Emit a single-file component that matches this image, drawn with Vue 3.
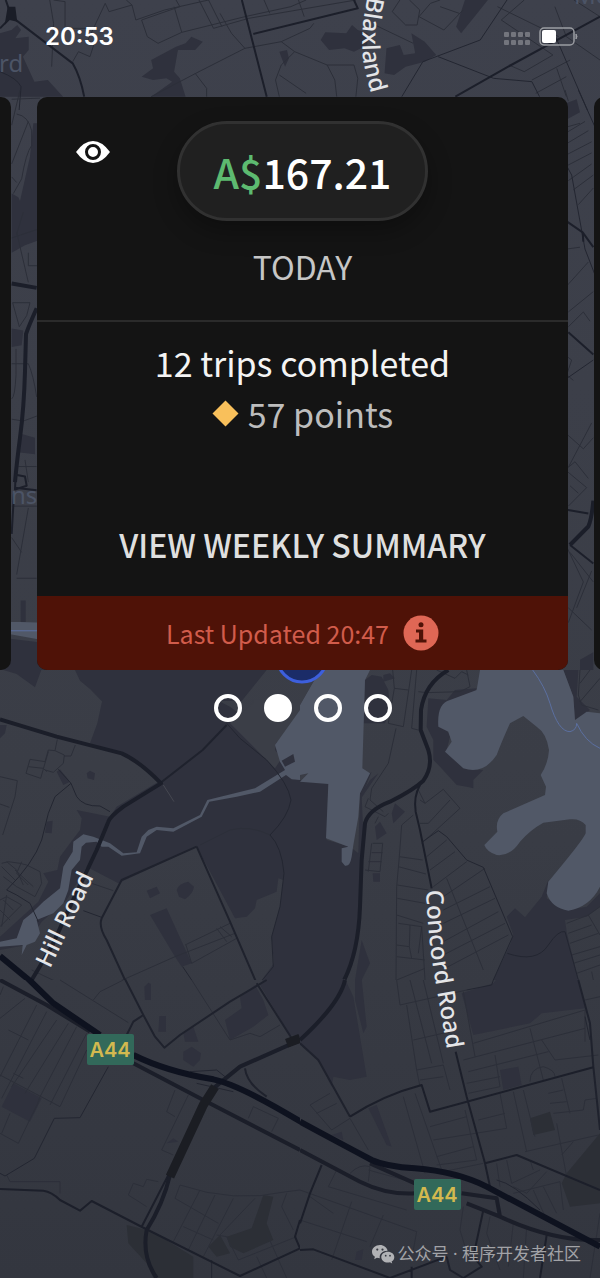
<template>
  <main class="screen">
    <svg class="map" viewBox="0 0 600 1278" preserveAspectRatio="xMidYMin slice" aria-hidden="true">
      <defs>
        <linearGradient id="ground" x1="0" y1="0" x2="0" y2="1">
          <stop offset="0" stop-color="#3e414c" />
          <stop offset="0.6" stop-color="#3a3d46" />
          <stop offset="1" stop-color="#33363f" />
        </linearGradient>
        <path id="hill-road" d="M50 969 L102 860" />
        <path id="concord-road" d="M426 890 Q428 940 436 985 T449 1062" />
        <path id="blaxland" d="M368 -4 Q360 30 363 58 Q366 78 376 110" />
      </defs>
      <rect width="600" height="1278" fill="url(#ground)" />

      <svg
        v-for="tile in tiles"
        :key="tile.name"
        :x="tile.x"
        :y="tile.y"
        :width="tile.width"
        :height="tile.height"
        :viewBox="tile.box"
        preserveAspectRatio="none"
      >
        <path v-for="(shape, index) in tile.shapes" :key="index" :class="shape[0]" :d="shape[1]" />
      </svg>

      <!-- 현재 위치 -->
      <circle class="location" cx="302" cy="657" r="25" />

      <text class="place" x="-1" y="72">rd</text>
      <text class="place" x="574" y="4">Me</text>
      <text class="place" x="11" y="504">ns</text>

      <text class="road-name"><textPath href="#blaxland">Blaxland</textPath></text>
      <text class="road-name"><textPath href="#hill-road">Hill Road</textPath></text>
      <text class="road-name"><textPath href="#concord-road">Concord Road</textPath></text>

      <g v-for="sign in signs" :key="sign.y">
        <rect class="sign" :x="sign.x" :y="sign.y" width="47" height="31" rx="2" />
        <text class="sign-text" :x="sign.x + 23" :y="sign.y + 23">A44</text>
      </g>
    </svg>

    <header class="status-bar">
      <time>20:53</time>
      <div class="status-icons">
        <svg width="28" height="18" viewBox="0 0 28 18" fill="#73757d" aria-hidden="true">
          <rect v-for="n in 8" :key="n" :x="((n - 1) % 4) * 7 + 1" :y="n > 4 ? 12 : 4" width="5" height="5" rx="1" />
        </svg>
        <svg width="39" height="20" viewBox="0 0 39 20" aria-hidden="true">
          <rect x="1" y="1" width="34" height="17" rx="4" fill="none" stroke="#9b9da2" stroke-width="1.5" />
          <rect x="3" y="3" width="14" height="13" rx="2" fill="#fff" />
          <path d="M37 7 Q39 9.500 37 12Z" fill="#9b9da2" stroke="#9b9da2" />
        </svg>
      </div>
    </header>

    <section class="carousel">
      <div class="card"></div>

      <article class="card">
        <div class="card-head">
          <button class="eye-btn" aria-label="Hide earnings" @click="hidden = !hidden">
            <svg width="36" height="36" viewBox="0 0 36 36">
              <path d="M1 18 Q9 7 18 7 T35 18 Q27 29 18 29 T1 18Z" fill="#fff" />
              <circle cx="18" cy="18" r="6.500" fill="#fff" stroke="#141414" stroke-width="3" />
            </svg>
          </button>
          <div class="amount">
            <span class="currency">A$</span><span>{{ hidden ? "•••" : "167.21" }}</span>
          </div>
          <h2 class="day">TODAY</h2>
        </div>

        <div class="card-body">
          <p class="trips">12 trips completed</p>
          <p class="points">
            <svg width="27" height="27" viewBox="0 0 27 27" aria-hidden="true">
              <path d="M13.500 0.500 L26.500 13.500 L13.500 26.500 L0.500 13.500Z" fill="#f9c05b" />
            </svg>
            <span>57 points</span>
          </p>
          <button class="summary-btn">VIEW WEEKLY SUMMARY</button>
        </div>

        <div class="card-foot">
          <span>Last Updated 20:47</span>
          <button class="info-btn" aria-label="Info">
            <svg width="36" height="36" viewBox="0 0 36 36">
              <circle cx="18" cy="18" r="17.500" fill="#df6755" />
              <circle cx="18" cy="9.800" r="2.500" fill="#4f1207" />
              <path d="M13 14.500H20.200V24.500H23.500V27.500H12.500V24.500H16V17.500H13Z" fill="#4f1207" />
            </svg>
          </button>
        </div>
      </article>

      <div class="card"></div>
    </section>

    <nav class="dots">
      <button
        v-for="n in 4"
        :key="n"
        class="dot"
        :class="{ active: n === current }"
        :aria-label="`Page ${n}`"
        @click="current = n"
      ></button>
    </nav>

    <footer class="account">
      <svg width="24" height="20" viewBox="0 0 24 20" aria-hidden="true">
        <path
          d="M9 1C4.500 1 1 4 1 7.700c0 2.100 1.100 3.900 2.900 5.100L3.200 15.200l2.700-1.400c1 .3 2 .4 2.900.4-.8-4 2.700-7.400 7.800-7.400C16 3.500 12.800 1 9 1Z"
          fill="#b1b2b5"
        />
        <path
          d="M23.300 13.200c0-3-2.900-5.400-6.500-5.400s-6.500 2.400-6.500 5.400 2.900 5.400 6.500 5.400c.8 0 1.500-.1 2.200-.3l2.200 1.200-.6-2c1.700-1 2.700-2.600 2.700-4.300Z"
          fill="#b1b2b5"
        />
        <g fill="#373a42">
          <circle cx="6.300" cy="5.600" r="1.100" />
          <circle cx="11.500" cy="5.600" r="1.100" />
          <circle cx="14.700" cy="11.700" r="0.900" />
          <circle cx="19" cy="11.700" r="0.900" />
        </g>
      </svg>
      <span>公众号 · 程序开发者社区</span>
    </footer>
  </main>
</template>

<script setup>
import { ref } from "vue";

const hidden = ref(false);
const current = ref(2);

const signs = [
  { x: 87, y: 1034 },
  { x: 414, y: 1179 },
];

// 지도 타일: [종류, 경로]
const tiles = [
  {
    name: "north",
    x: 0,
    y: 0,
    width: 600,
    height: 110,
    box: "0 0 1568 330",
    shapes: [
      ["park", "M0 100 L30 90 L45 75 L55 90 L40 115 L75 110 L75 150 L60 170 L90 245 L125 240 L165 290 H0Z"],
      ["park", "M370 230 L400 205 L395 180 L460 140 L485 130 L500 110 L530 125 L510 150 L465 150 L455 215 L470 235 L485 290 H395 L450 245 L435 235 L400 240Z"],
      ["park", "M838 120 L850 97 L905 100 L920 75 L935 90 L960 100 L960 135 L925 155 L900 145 L860 150Z"],
      ["park", "M1010 145 L1045 135 L1055 165 L1085 160 L1075 100 L1110 125 L1140 165 L1110 185 L1060 200 L1030 225 L1005 220Z"],
      ["park", "M1215 0 H1275 L1240 50 L1205 100 L1192 80Z M730 155 L750 150 L755 175 L745 200 L738 180Z"],
      ["lane", "M130 0 L140 70 L135 200 M140 0 L170 5 L170 85 L230 85 M275 10 L230 120 L245 135 L235 170 L205 155 L190 185 M275 10 L285 35 L345 15 L330 0 M345 15 L355 60 L430 30 L545 0"],
      ["lane", "M370 60 L470 20 L460 0 M370 60 L385 110 L413 130 L475 97 L455 20 M475 97 L640 50 L760 20 L800 0 M520 0 L558 85 L650 55 M545 0 L580 80 M650 55 L930 0 M690 0 L705 40 M780 0 L795 50"],
      ["lane", "M395 290 L520 215 L640 145 L735 125 L770 155 L855 195 L925 195 L935 235 L930 290 M770 155 L735 195 L720 240 L730 290 M855 195 L875 240 L880 290 M640 145 L605 100 L575 40 M820 70 L810 85 L735 125 M510 220 L540 265 L540 290 M730 225 L800 280"],
      ["lane", "M1045 0 L1025 35 L1060 75 L1090 75 L1097 30 L1070 0 M1125 10 L1095 50 L1160 90 L1210 30 M1125 10 L1150 0 M1150 20 L1200 40 M980 75 L1080 130 M1300 20 L1460 110 M1370 0 L1310 60 L1445 165 L1370 215 L1330 195 M1450 20 L1480 110 L1568 180 M1390 240 L1490 180 M1400 280 L1480 230 M1455 205 L1480 290 M1500 0 L1568 50"],
      ["street", "M0 215 Q45 235 55 260 L50 330 M1325 0 L1255 120 L1105 185 L1050 290 M1145 170 L1290 235 L1390 245 L1410 290 M1450 105 L1535 330"],
      ["road", "M15 0 L30 50 L0 85 M30 50 L190 190 Q210 230 220 290 M632 0 L697 290 M662 102 L935 25 L925 0 M1190 290 L1320 205 L1568 50"],
      ["junction", "M20 20 H40 L45 65 L25 60 L12 75Z"],
    ],
  },
  {
    name: "west",
    x: 0,
    y: 90,
    width: 45,
    height: 580,
    box: "0 0 135 1568",
    shapes: [
      ["park", "M35 280 L55 290 L75 330 L60 300 L90 180 L100 90 H135 V400 L75 420 L35 440Z"],
      ["park", "M35 645 L70 650 L65 690 L35 695Z M65 930 L105 940 V985 L60 980Z M62 1380 H77 V1438 H62Z"],
      ["water", "M0 1438 H60 L135 1440 V1488 L35 1472 H0Z"],
      ["river", "M0 1462 H135"],
      ["park", "M0 1480 L135 1495 V1568 H0Z"],
      ["lane", "M50 65 Q85 70 95 110 L95 150 Q78 170 65 240 L40 280 M85 85 L35 200 M35 235 L50 250 M50 385 L85 520 M70 330 L50 390 M85 440 V475 H125 M35 400 L135 370 M38 575 L90 575 L80 610 L58 640Z M48 700 V770 Q45 830 35 835 M35 740 H85 Q100 770 110 830 M35 890 L70 895 L115 880 M75 1000 L85 1060 M55 1018 H110 M85 1130 L50 1310 M35 1125 H120 M65 1250 L35 1210 M50 1320 H110"],
      ["lane", "M60 0 L35 95 M35 25 L120 22"],
      ["major", "M35 523 L110 535 M110 590 Q85 640 78 660 L75 760 Q72 860 60 940 Q50 1010 45 1060"],
      ["road", "M42 1090 L35 1200 M45 1075 L110 1082 M47 1040 L75 1045 L80 1070 L45 1080Z"],
    ],
  },
  {
    name: "east",
    x: 560,
    y: 90,
    width: 40,
    height: 580,
    box: "0 0 120 1568",
    shapes: [
      ["park", "M20 35 L50 25 L60 60 L20 80Z M60 1540 L100 1520 V1568 H60Z"],
      ["lane", "M20 115 L75 85 M20 145 L85 110 M20 175 L95 140 M20 205 L95 170 M25 245 L95 200 M40 270 L100 230 M55 310 L100 265 M20 100 L60 90 M15 0 L25 30 M20 430 L60 425 M20 530 L85 465 M25 600 L100 545 M25 640 L70 600 L90 625 M20 720 L35 730 L20 770 L40 785"],
      ["lane", "M20 930 L70 970 L100 940 M95 900 L25 1020 L45 1005 L85 1050 M20 1030 L80 1075 L25 1125 M30 1070 L55 1090 M20 1235 L70 1330 L25 1440 M25 1400 L95 1460 M95 1300 L50 1400 M30 1250 L100 1330"],
      ["street", "M20 205 L35 230 L65 380 L75 430 L105 500 M55 0 L105 100 M20 780 L100 730"],
      ["road", "M20 355 L68 385 L100 425 M68 385 L70 410 M25 655 L100 715 M20 1135 L85 1145 M30 1230 L100 1280"],
      ["major", "M100 1110 Q95 1160 85 1180 L30 1230"],
    ],
  },
  {
    name: "shore",
    x: 0,
    y: 669,
    width: 300,
    height: 32,
    box: "0 0 900 96",
    shapes: [
      ["park", "M0 0 H125 L105 55 L50 15 L0 0Z M225 3 H800 L725 96 H300 L305 96 L270 60 L240 35Z"],
    ],
  },
  {
    name: "west-park",
    x: 0,
    y: 700,
    width: 300,
    height: 280,
    box: "0 0 900 840",
    shapes: [
      ["park", "M307 0 L292 70 L270 130 L380 165 L475 245 L350 320 L330 350 L230 330 L245 355 L240 390 L210 430 L180 470 L172 510 L130 520 L145 545 L115 605 L0 710 V750 L80 735 L125 665 L200 600 L260 500 L355 550 L590 440 L705 655 L740 650 L765 625 L770 600 L830 575 L835 535 L850 540 L840 620 L815 710 L822 790 L785 840 H900 V240 L880 235 L858 200 L860 170 L825 140 L830 125 L690 20 L650 0Z"],
      ["land", "M690 70 L760 10 L760 0 H900 V100 L830 125 L825 150 L845 175 L825 205Z"],
      ["park", "M260 220 L270 212 L285 220 L282 240 L263 235Z M440 572 L470 560 L480 580 L450 595Z M530 570 Q535 550 565 545 L582 560 Q580 580 555 598 L537 590Z M450 645 L500 625 L575 790 L545 800 L525 770Z M170 215 L180 208 L210 245 L190 255Z M140 365 L158 362 L155 400 L135 398Z M0 75 H20 L15 100 L0 115Z"],
      ["water", "M825 135 L900 30 V240 L875 238 L858 225 L780 275 L710 290 L628 305 L605 350 L520 395 L470 390 L440 410 L420 460 L365 467 L325 440 L305 440 L290 425 L258 428 L245 440 L240 480 L215 510 L205 570 L190 610 L160 640 L110 660 L120 700 L105 725 L80 735 L65 765 L68 735 L0 740 V725 L50 715 L70 660 L95 640 L130 605 L180 565 L190 500 L218 455 L220 425 L250 403 L280 410 L330 430 L370 460 L410 457 L425 410 L445 390 L470 380 L520 385 L600 345 L622 300 L765 265 L855 210 L840 185Z"],
      ["park", "M845 182 L880 162 L885 185 L855 200Z"],
      ["lane", "M0 230 L52 242 L45 290 L8 405 M0 312 L28 322 M172 118 L165 152 L145 150 L135 185 L90 178 L78 220 L122 235 L145 155 M85 200 L130 205 M135 210 L160 217 L190 190 L193 165 L165 152 M193 168 L213 168 L226 135 M130 205 L140 215 M5 490 L25 485 L60 490 L80 495 L120 515 L125 550 L105 590 L50 560 L10 530 M5 500 L45 540 M65 485 L50 520 L85 555 M20 485 L50 510 L70 555 M45 510 L100 560 M0 600 L20 590 L65 615 L0 680 M10 600 L40 630 M0 630 L30 660 M20 585 L5 680 M260 545 L340 572"],
      ["lane", "M95 810 L280 898 L300 870 L525 770 L705 700 M555 735 L690 670 M558 735 L575 790 L710 715 M650 685 L680 725 M660 680 L695 710 M600 435 L690 390 Q750 375 810 405"],
      ["street", "M213 250 L165 290 L145 340 L125 420 Q100 490 20 570 L50 585 L90 610 L115 665 M175 208 L213 250 L230 290 Q250 320 300 318 L330 335 M250 632 L305 652 M680 70 L720 115 L800 180 Q865 250 873 300 Q865 350 810 405 Q845 440 852 520 L840 620 L815 710 L820 800 L775 855 M548 800 L575 840"],
      ["path", "M680 75 L608 150 L480 250 M590 440 L365 540 L305 655 Q295 680 320 720 L375 840 M590 440 L690 665 L770 850"],
      ["faint", "M490 255 L522 305"],
      ["major", "M0 58 L170 110 L365 160 Q420 185 483 250 L370 320 Q330 350 325 365 L290 450 L210 620 L155 740 L95 840"],
      ["highway", "M0 768 L87 840 L130 875"],
    ],
  },
  {
    name: "bay",
    x: 300,
    y: 660,
    width: 300,
    height: 320,
    box: "0 0 900 960",
    shapes: [
      ["park", "M0 360 L85 370 L80 540 L150 560 L175 580 L180 400 L210 340 L215 335 L185 410 L190 520 L170 820 L140 960 H0Z"],
      ["park", "M210 360 L235 340 L180 420 L185 400Z M385 115 L440 120 L465 90 L530 85 L520 110 L420 160 L450 230 L440 270 L490 325 L550 330 L520 360 L520 385 L500 380 L470 375 L420 320 L400 300 L400 240 L380 200Z"],
      ["park", "M580 960 L630 855 L640 825 L620 770 L645 745 L675 772 L725 710 L745 660 L740 715 L800 750 L860 740 L900 700 V740 L860 770 L795 780 L800 815 L835 960Z"],
      ["park", "M250 45 L270 40 L285 55 L250 65Z M285 430 L315 455 L280 490 L275 460Z M240 485 L260 520 L230 540 L225 500Z M218 640 L240 640 V665 H220Z M185 840 L210 910 L185 960 H165 L175 900Z M265 90 L270 150 L255 190 L190 190 L195 60 L215 45 L245 50Z"],
      ["park", "M790 30 H835 L830 110 L870 150 L825 185 L820 110Z"],
      ["water", "M60 30 H210 L195 60 L187 325 L210 340 L180 400 L175 470 L160 555 L155 590 Q150 620 135 617 L125 605 L125 565 L145 560 L78 535 L85 372 L0 365 L25 340 L0 345 V135Z"],
      ["water", "M540 30 H790 L820 110 L825 180 L860 155 L900 160 V680 Q870 740 805 752 Q755 745 740 700 L745 665 Q850 540 857 520 V495 Q840 475 810 478 L730 488 Q690 510 660 545 Q630 590 590 585 Q560 575 553 555 L592 515 Q585 480 610 460 L735 405 L738 380 L722 345 Q745 310 747 270 Q740 220 710 200 L670 168 L630 190 Q605 245 590 285 Q550 345 490 325 L435 275 L455 245 L445 215 L415 200 Q410 130 450 120 L530 90Z"],
      ["land", "M0 135 L60 30 H0Z"],
      ["river", "M698 30 Q735 80 750 130 Q775 215 810 215 Q830 210 830 190 Q855 245 900 265"],
      ["lane", "M278 30 L283 85 L265 190 M283 85 L325 90 M335 30 L310 200 L265 190 M350 30 L335 205 L355 210 M355 95 L380 98 L480 95 L510 80 L500 30 M410 30 L465 55 L485 35 L505 45 M288 205 L265 310 L215 385 L210 420 M205 415 L195 440 L225 455 L255 470 L265 460 M210 420 L250 455 M225 490 L235 470 M218 550 H248 L240 635 L195 630 M215 578 H248 M205 605 H245 M215 550 L205 635 M340 465 L305 495 L298 590 L290 680 L288 960"],
      ["lane", "M298 590 L368 600 M295 620 L378 642 M292 675 L385 690 M292 715 L375 730 M290 765 L370 790 M295 790 L365 800 L355 880 M330 795 L328 860 L290 855 M328 860 L335 895 M290 890 L375 900 M290 960 L375 925 M365 800 L375 960 M355 390 L375 430 L430 388 L480 445 L365 550 M375 430 L360 420 M450 420 L385 490 L360 490 M380 590 L440 540 M390 630 L465 575 M400 680 L500 605 M440 655 L550 930 M430 710 L555 625 M430 750 L570 680 M430 790 L585 715 M430 845 L595 755 M430 885 L615 790 M435 925 L625 825"],
      ["lane", "M840 30 L835 105 L845 135 L895 150 M870 30 L840 70 M900 55 L840 125 M865 765 L900 825 M900 740 L865 765 L800 790 M805 820 L875 795 M810 850 L895 820 M815 885 L900 860 M820 910 L900 885 M830 940 L900 915 M875 935 L880 960"],
      ["street", "M415 512 L440 530 L500 600 L550 622 L638 830 L580 960 M622 880 Q710 910 745 855 Q775 810 795 815 L835 960 M368 545 L415 512"],
      ["road", "M360 375 Q340 410 347 455 L360 510 L395 685"],
      ["major", "M445 30 Q375 70 363 150 L362 210 L385 270 Q400 320 370 362 Q340 390 270 425 Q205 450 195 490 L185 600 L180 740 Q175 880 130 965"],
    ],
  },
  {
    name: "south-west",
    x: 0,
    y: 979,
    width: 300,
    height: 299,
    box: "0 -3 900 897",
    shapes: [
      ["park", "M780 15 L790 -3 H900 V170 L870 165Z M675 120 L725 85 L720 50 L765 15 L790 60 L805 105 L760 140 L690 180Z M433 20 L445 8 L453 12 V60 H435Z M478 108 H498 V155 H475Z M550 160 L580 140 L595 185 H555Z M550 215 L575 200 L603 220 L600 240 L580 260 L550 240Z M40 310 L125 355 L90 425 L5 380Z M500 490 L520 475 L535 485Z"],
      ["dark", "M380 735 L420 745 L465 760 L580 830 V894 H460 L440 850 L385 790Z M790 645 L820 650 L800 730 L820 780 L730 820 L690 800 L680 770 L755 745Z M625 800 L660 765 L690 820 L650 830Z"],
      ["lane", "M180 0 L385 128 M280 60 L300 35 L370 0 M575 0 L690 180 L750 160 L780 170 L840 135 M0 45 L10 20 M0 115 L75 55 M0 290 L110 75 M5 355 L140 95 M35 320 L170 120 M75 340 L205 130 M115 360 L230 140 M150 375 L260 160 M180 380 L260 210 M25 150 L85 180 M0 285 L180 380 M0 460 L55 490 L120 355 M30 400 L5 460 M40 280 L70 295"],
      ["lane", "M525 330 L500 395 L525 410 M565 345 L485 510 L520 525 M745 415 L760 380 L835 415 L815 455 M20 585 L30 605 L180 605 V640 M400 610 L385 645 L440 680 M400 610 L430 620 L440 598 L475 605 M540 615 L525 655 L655 730 M540 615 Q700 670 860 635 L900 630 M600 630 L520 785 M645 645 L565 810 M700 655 L610 830 M765 655 L660 765 M550 740 L640 780 M650 765 L680 770 L715 840 L890 770 M800 760 L860 894 M860 640 L845 680 L880 750 M770 830 L800 894"],
      ["street", "M325 260 L240 413 L163 415 L103 535 L15 588 L0 580 M570 275 L650 270 L675 290 M590 310 L700 335 M635 840 V894"],
      ["path", "M375 -3 L430 105 L400 125 L380 165 M430 105 L465 170 L493 203 L540 165 L690 65 L800 0 M770 10 L875 175 M735 265 Q740 310 800 350"],
      ["road", "M0 627 L130 632 Q155 635 180 660 L240 692 L275 663 L420 738 L720 888 L900 805 L885 770 L900 720 M505 585 L425 740"],
      ["major", "M0 0 L140 75 L270 155 M400 250 L610 360 L900 510 M900 180 L720 260 L640 325 M510 585 Q490 670 440 750 Q425 830 470 894"],
      ["avenue", "M645 320 L610 375 L510 590"],
      ["avenue", "M860 190 L900 175"],
      ["highway", "M82 -6 L160 70 L300 165 M400 225 Q500 275 640 298 Q720 315 905 427"],
    ],
  },
  {
    name: "south-east",
    x: 300,
    y: 979,
    width: 300,
    height: 299,
    box: "0 -3 900 897",
    shapes: [
      ["park", "M0 -3 H135 L160 50 L200 290 L150 300 L100 290 L95 320 L60 250 L0 190Z M580 10 L590 -3 H835 L855 85 L725 100 L690 130 L520 165 L485 40Z M165 -3 H185 L200 140 L190 160 L165 60Z M600 270 L655 260 L665 315 L610 330Z M205 385 L230 375 L275 500 L260 495Z M95 465 L125 455 L130 480Z M170 815 L190 808 L185 840 L165 840Z"],
      ["dark", "M690 415 L750 395 L765 450 L700 465Z M900 460 L800 580 L785 610 L810 680 L900 670Z"],
      ["lane", "M290 0 L300 75 L500 30 M320 75 L350 270 M330 0 L395 250 M370 0 L430 250 M340 180 L450 155 M350 270 L430 255 L450 330 M350 270 L360 320 M360 300 L430 290 M490 35 L525 230 M490 240 L855 145 M520 190 L855 90 M855 90 V185 M505 275 L745 215 M500 310 L600 290 M505 340 L600 320 M585 225 L600 320 M690 145 L730 300 M725 180 L765 240 L895 225 M690 305 Q690 265 730 260 Q765 270 765 290"],
      ["lane", "M310 350 L375 580 M345 340 L425 570 M390 440 L500 410 M400 480 L620 445 L600 340 M410 530 L520 500 M410 555 L530 540 M495 390 L530 540 M535 420 L615 400 M640 335 L680 515 M670 330 L705 470 M745 340 L790 330 M750 370 L800 365 M760 400 L850 390 L855 360 L890 355 M785 295 L810 400 M675 515 L895 465 M770 430 L800 590 M785 525 L820 485 M855 60 L900 50"],
      ["lane", "M30 375 L90 340 M30 375 L95 450 L150 415 M50 400 L110 370 M150 415 L205 510 M110 570 L85 620 M150 580 Q180 550 210 560 L205 605 M205 570 L350 610 M85 620 L320 690 M0 630 L350 755 L340 810 M0 720 L200 785 M155 665 L95 840 M250 705 L210 800 M30 650 L100 700 M490 680 L480 750 L510 850 M570 710 L560 760 L600 870 M640 730 L625 860 M680 740 L670 894 M740 575 L680 640 L640 620 M620 540 L635 610 L720 570 M690 540 L700 570 M590 550 L600 620 M640 640 L780 605 L790 690 M700 630 L740 720 M730 620 L770 700 M900 700 L870 894 M430 575 L550 550"],
      ["street", "M580 0 L575 15 L500 30 M855 110 L870 180 M590 600 Q640 610 720 690"],
      ["path", "M835 0 L870 130 L880 260 L900 450 M0 190 L55 240 L150 410 M440 830 L450 870 L490 894"],
      ["road", "M150 410 Q250 345 365 315 L390 395 L880 262 M467 215 L500 350 L555 550 L570 620 M555 550 L650 525 L900 630 M65 555 L30 640 L0 730 M0 810 L40 808 L270 894 M270 894 L440 830 M550 690 L520 830 L545 860 L490 894 M740 765 L720 894 M335 860 V894"],
      ["major", "M135 0 Q120 70 0 180 M0 510 L180 605 Q260 645 345 640 M210 550 L345 610 M485 640 L590 655 L600 710 M500 670 L600 710 Q760 785 900 780"],
      ["highway", "M0 425 Q120 490 215 540 Q260 560 345 565 Q470 575 560 620 L900 800"],
    ],
  },
];
</script>

<style>
body {
  margin: 0;
  background: #34373f;
}
</style>

<style scoped>
.screen {
  position: relative;
  display: flex;
  flex-direction: column;
  min-height: 100vh;
  overflow: hidden;
  color: #fff;
  font-family: "Noto Sans CJK SC", "Noto Sans", sans-serif;
}

/* 지도 */
.map {
  position: absolute;
  top: 0;
  left: 0;
  width: 100%;
  height: 100%;
}

.map path {
  fill: none;
  stroke-linejoin: round;
  vector-effect: non-scaling-stroke;
}

.map .park {
  fill: #2f313d;
}

.map .dark {
  fill: #2c2f36;
}

.map .land {
  fill: #3b3e47;
}

.map .water {
  fill: #515867;
}

.map .lane {
  stroke: #2c2f39;
  stroke-width: 1px;
}

.map .street {
  stroke: #232631;
  stroke-width: 1px;
}

.map .path {
  stroke: #1f222d;
  stroke-width: 2px;
}

.map .road {
  stroke: #1c1f2a;
  stroke-width: 2px;
}

.map .major {
  stroke: #1b1e29;
  stroke-width: 4px;
}

.map .avenue {
  stroke: #1b1d23;
  stroke-width: 9px;
}

.map .highway {
  stroke: #0e121f;
  stroke-width: 6px;
}

.map .river {
  stroke: #5b6fa0;
  stroke-width: 1px;
}

.map .faint {
  stroke: #454750;
  stroke-width: 1px;
}

.map .junction {
  fill: #1a1d27;
}

.location {
  fill: #1b2c68;
  stroke: #3d5fdd;
  stroke-width: 3px;
}

.place {
  fill: #4c5466;
  font-family: "Noto Sans", sans-serif;
  font-size: 24px;
}

.road-name {
  fill: #e4e5e8;
  font-family: "Noto Sans", sans-serif;
  font-size: 24px;
  font-weight: 500;
}

.sign {
  fill: #32695a;
}

.sign-text {
  fill: #d3b94f;
  font-family: Inter, sans-serif;
  font-size: 20px;
  font-weight: 600;
  text-anchor: middle;
}

/* 상태 표시줄 */
.status-bar {
  position: relative;
  display: flex;
  align-items: center;
  justify-content: space-between;
  height: 73px;
  padding: 0 22px 0 45px;
  margin-bottom: 24px;
  font-family: Inter, sans-serif;
  font-size: 24px;
  font-weight: 600;
}

.status-icons {
  display: flex;
  align-items: center;
  gap: 8px;
}

/* 카드 */
.carousel {
  position: relative;
  display: flex;
  justify-content: center;
  gap: 26px;
  padding-left: 5px;
}

.card {
  flex: 0 0 calc(100% - 64px);
  box-sizing: border-box;
  border-radius: 10px;
  background: #141414;
  overflow: hidden;
}

.card-head {
  display: grid;
  grid-template-columns: 1fr auto 1fr;
  align-items: start;
  padding: 24px 38px 34px;
  border-bottom: 2px solid #2b2b2b;
}

button {
  padding: 0;
  border: none;
  background: transparent;
  color: inherit;
  font: inherit;
  cursor: pointer;
}

.eye-btn,
.info-btn {
  justify-self: start;
  height: 36px;
  line-height: 0;
}

.eye-btn {
  margin-top: 13px;
}

.amount {
  display: flex;
  align-items: center;
  justify-content: center;
  box-sizing: border-box;
  min-width: 251px;
  height: 100px;
  padding: 0 32px;
  border: 3px solid #313131;
  border-radius: 50px;
  background: #202020;
  box-shadow: 0 10px 24px rgba(0, 0, 0, 0.3);
  font-size: 41px;
  font-weight: 500;
}

.currency {
  color: #5dba70;
}

.day {
  grid-column: 1 / -1;
  margin: 25px 0 0;
  color: #c6c6c6;
  font-size: 32px;
  font-weight: 400;
  line-height: 40px;
  text-align: center;
}

.card-body {
  display: flex;
  flex-direction: column;
  align-items: center;
  padding: 15px 20px 32px;
  font-size: 34px;
  line-height: 51px;
}

.card-body p {
  margin: 0;
}

.trips {
  color: #f4f4f4;
}

.points {
  display: flex;
  align-items: center;
  gap: 9px;
  color: #bdbdbd;
}

.summary-btn {
  margin-top: 85px;
  color: #dfdfdf;
  font-size: 32px;
  font-weight: 500;
  line-height: 40px;
}

.card-foot {
  display: flex;
  align-items: center;
  justify-content: center;
  gap: 14px;
  height: 74px;
  background: #4f1207;
  color: #d15c4b;
  font-size: 25px;
}

/* 페이지 표시 */
.dots {
  position: relative;
  display: flex;
  justify-content: center;
  gap: 22px;
  padding: 24px 0 0 5px;
}

.dot {
  box-sizing: border-box;
  width: 28px;
  height: 28px;
  border: 4px solid #fff;
  border-radius: 50%;
}

.dot.active {
  background: #fff;
}

.account {
  position: relative;
  display: flex;
  align-items: center;
  justify-content: flex-end;
  gap: 3px;
  margin-top: auto;
  padding: 0 19px 12px;
  color: #a2a3a7;
  font-family: "Noto Sans", "Noto Sans CJK SC", sans-serif;
  font-size: 17px;
  line-height: 24px;
}
</style>
